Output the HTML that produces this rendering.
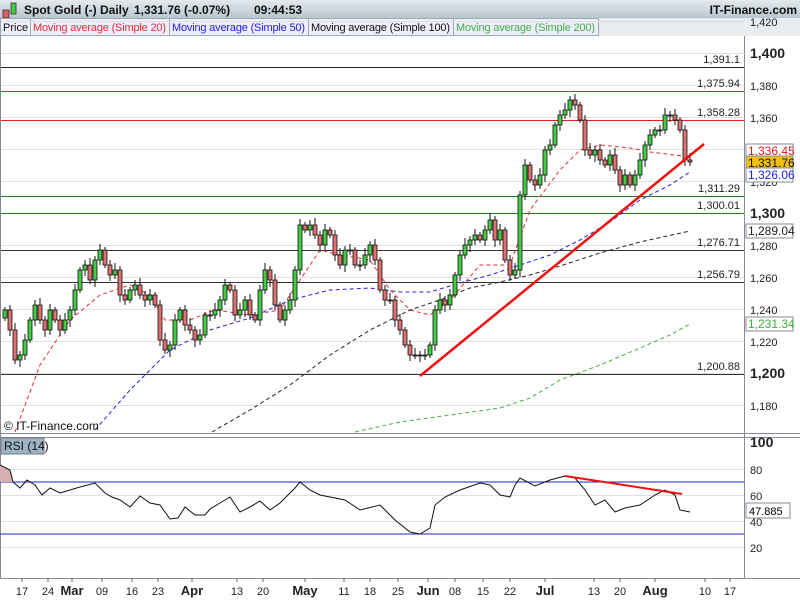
<!DOCTYPE html>
<html><head><meta charset="utf-8"><style>
body{margin:0;width:800px;height:600px;overflow:hidden;background:#fff;font-family:"Liberation Sans",sans-serif;}
svg text{font-family:"Liberation Sans",sans-serif;}
</style></head><body>
<svg id="s" width="800" height="600" xmlns="http://www.w3.org/2000/svg">
<defs><linearGradient id="hg" x1="0" y1="0" x2="0" y2="1"><stop offset="0" stop-color="#e4eaee"/><stop offset="1" stop-color="#b9c6cf"/></linearGradient></defs>
<rect x="0" y="0" width="800" height="18" fill="url(#hg)"/>
<rect x="3" y="10" width="6" height="8" fill="#e06060" stroke="#333" stroke-width="0.8"/>
<rect x="11" y="3" width="5" height="11" fill="#44cc44" stroke="#333" stroke-width="0.8"/>
<g font-size="12" font-weight="bold" fill="#111">
<text x="24" y="14">Spot Gold (-)</text>
<text x="100" y="14">Daily</text>
<text x="134" y="14">1,331.76 (-0.07%)</text>
<text x="254" y="14">09:44:53</text>
<text x="797" y="14" text-anchor="end">IT-Finance.com</text>
</g>
<rect x="0" y="18" width="800" height="18" fill="#e8ecef"/>
<g font-size="11">
<rect x="0.5" y="18.5" width="30" height="17" fill="#eef" stroke="#9aa" /><text x="3" y="31" fill="#111">Price</text>
<rect x="30.5" y="18.5" width="139" height="17" fill="#eef" stroke="#9aa"/><text x="33" y="31" fill="#e03030" textLength="133">Moving average (Simple 20)</text>
<rect x="169.5" y="18.5" width="139" height="17" fill="#eef" stroke="#9aa"/><text x="172" y="31" fill="#2020e0" textLength="133">Moving average (Simple 50)</text>
<rect x="308.5" y="18.5" width="145" height="17" fill="#eef" stroke="#9aa"/><text x="311" y="31" fill="#111" textLength="139">Moving average (Simple 100)</text>
<rect x="453.5" y="18.5" width="145" height="17" fill="#eef" stroke="#9aa"/><text x="456" y="31" fill="#40b040" textLength="139">Moving average (Simple 200)</text>
</g>
<g id="grid" stroke="#e0e0e0" stroke-width="1"></g>
<line x1="744.5" y1="36" x2="744.5" y2="578" stroke="#889"/>
<line x1="0.5" y1="36" x2="0.5" y2="578" stroke="#889"/>
<line x1="0" y1="433.5" x2="800" y2="433.5" stroke="#889"/>
<line x1="0" y1="437.5" x2="800" y2="437.5" stroke="#889"/>
<line x1="0" y1="578.5" x2="800" y2="578.5" stroke="#889"/>
<g id="hl"></g>
<g fill="none" stroke-dasharray="4,3" stroke-width="1">
<polyline stroke="#e03030" points="15,432 40,365 70,320 100,295 130,285 150,295 165,320 190,320 215,310 250,315 280,310 300,280 320,250 340,255 370,260 390,290 410,310 430,315 450,300 480,265 510,265 530,210 560,170 580,150 600,145 630,148 650,152 690,157"/>
<polyline stroke="#2020e0" points="95,430 130,390 170,350 210,330 250,318 290,300 330,290 370,288 400,292 430,292 460,283 490,275 520,265 550,255 580,240 610,222 640,200 670,185 690,172"/>
<polyline stroke="#222" points="212,432 250,410 290,385 330,355 370,330 410,310 440,300 470,288 500,282 530,275 560,266 600,253 640,242 690,231"/>
<polyline stroke="#40b040" points="355,432 400,422 450,415 500,408 530,398 560,380 600,365 640,348 670,335 690,324"/>
</g>
<g id="cd"></g>
<line x1="420" y1="376" x2="704" y2="144" stroke="#f01010" stroke-width="2.5"/>
<text x="4" y="430" font-size="12" fill="#111">© IT-Finance.com</text>
<g id="ax" font-size="11" fill="#222"></g>
<rect x="1" y="438" width="43" height="16" fill="#9bb3c2" stroke="#778"/>
<text x="4" y="450" font-size="12" fill="#111">RSI (14)</text>
<line x1="0" y1="482" x2="744" y2="482" stroke="#2020c0"/>
<line x1="0" y1="534" x2="744" y2="534" stroke="#2020c0"/>
<polygon points="0,465 10,470 13,482 0,482" fill="#d4b0b0"/>
<polyline fill="none" stroke="#111" stroke-width="1" points="0,465 10,470 13,482 20,488 27,480 35,485 42,495 50,488 60,493 70,490 80,487 95,483 105,493 112,497 120,500 130,507 140,496 150,503 160,505 170,519 178,518 185,507 195,515 205,515 210,509 220,503 230,497 240,512 250,507 260,501 270,510 280,503 295,488 300,482 310,490 320,495 330,497 345,500 360,510 380,505 395,520 410,532 420,534 430,528 435,505 445,497 460,490 480,483 490,485 500,495 510,497 515,485 520,478 535,486 550,480 565,476 575,478 585,490 595,505 605,500 615,512 625,508 640,505 655,495 665,490 675,495 680,510 690,512"/>
<line x1="565" y1="476" x2="682" y2="494" stroke="#f01010" stroke-width="2"/>
<rect x="746" y="503" width="44" height="15" fill="#fff" stroke="#889"/>
<text x="749" y="515" font-size="11">47.885</text>
</svg>
<script>
var NS="http://www.w3.org/2000/svg",s=document.getElementById('s');
function el(p,t,a,tx){var e=document.createElementNS(NS,t);for(var k in a)e.setAttribute(k,a[k]);if(tx)e.textContent=tx;document.getElementById(p).appendChild(e);return e;}
var g=[21,53,85,117,149,181,213,245,277,309,341,373,405];
g.forEach(function(y){el('grid','line',{x1:1,x2:744,y1:y+.5,y2:y+.5});});
[469,495,521,547].forEach(function(y){el('grid','line',{x1:1,x2:744,y1:y+.5,y2:y+.5});});
var pl=['1,420','1,400','1,380','1,360','1,340','1,320','1,300','1,280','1,260','1,240','1,220','1,200','1,180'];
g.forEach(function(y,i){var b=(pl[i]=='1,400'||pl[i]=='1,300'||pl[i]=='1,200');el('ax','text',{x:750,y:y+5,'font-size':b?14:11,'font-weight':b?'bold':'normal'},pl[i]);});
[[100,442],[80,469],[60,495],[40,521],[20,547]].forEach(function(a){var b=a[0]==100;el('ax','text',{x:750,y:a[1]+5,'font-size':b?14:11,'font-weight':b?'bold':'normal'},a[0]);});
var H=[[67,'1,391.1','#222'],[91,'1,375.94','#e02020'],[120,'1,358.28','#e02020'],[196,'1,311.29','#208020'],[213,'1,300.01','#208020'],[250,'1,276.71','#333'],[282,'1,256.79','#333'],[374,'1,200.88','#333']];
H.forEach(function(h){el('hl','line',{x1:1,x2:744,y1:h[0]+.5,y2:h[0]+.5,stroke:h[2]});el('hl','text',{x:740,y:h[0]-4,'font-size':11,'text-anchor':'end',fill:'#222'},h[1]);});
var B=[[151,'1,336.45','#e02020','#fff'],[163,'1,331.76','#111','#f0c010'],[175,'1,326.06','#2020e0','#fff'],[231,'1,289.04','#222','#fff'],[324,'1,231.34','#40b040','#fff']];
B.forEach(function(b){el('ax','rect',{x:746,y:b[0]-7,width:47,height:14,fill:b[3],stroke:'#889'});el('ax','text',{x:748,y:b[0]+4,fill:b[2],'font-size':12},b[1]);});
var X=[[22,'17'],[48,'24'],[72,'Mar'],[102,'09'],[132,'16'],[158,'23'],[192,'Apr'],[237,'13'],[263,'20'],[305,'May'],[344,'11'],[370,'18'],[398,'25'],[428,'Jun'],[455,'08'],[483,'15'],[510,'22'],[545,'Jul'],[594,'13'],[620,'20'],[655,'Aug'],[705,'10'],[730,'17']];
X.forEach(function(x){var b=isNaN(+x[1]);el('ax','line',{x1:x[0],x2:x[0],y1:578,y2:582,stroke:'#666'});el('ax','text',{x:x[0],y:595,'text-anchor':'middle','font-size':b?13:11,'font-weight':b?'bold':'normal'},x[1]);});
var c=[310,330,360,355,340,320,305,320,330,310,320,330,320,310,290,270,265,280,260,250,265,275,270,295,300,290,285,295,300,295,305,340,350,345,320,310,325,330,340,335,315,315,310,300,285,290,315,310,300,315,320,290,270,280,305,320,310,300,270,225,230,225,235,245,230,235,255,265,250,250,265,265,255,245,260,290,300,300,320,330,345,355,355,355,355,345,310,300,305,295,275,255,245,240,235,240,230,220,240,230,260,275,270,195,165,180,185,175,150,145,125,115,110,100,105,120,150,155,150,160,165,155,170,185,175,185,175,160,145,135,130,130,115,115,120,130,160,162];
var o=c[0]+8;
c.forEach(function(cl,i){var x=5+i*(685/(c.length-1));var hi=Math.min(o,cl)-3-(i*7%5),lo=Math.max(o,cl)+3+(i*3%5);
el('cd','line',{x1:x,x2:x,y1:hi,y2:lo,stroke:'#111'});
var t=Math.min(o,cl),h=Math.max(Math.abs(o-cl),1);
el('cd','rect',{x:x-2,y:t,width:4,height:h,fill:cl<o?'#44cc44':'#e07070',stroke:'#111','stroke-width':0.8});o=cl;});
</script>
</body></html>
